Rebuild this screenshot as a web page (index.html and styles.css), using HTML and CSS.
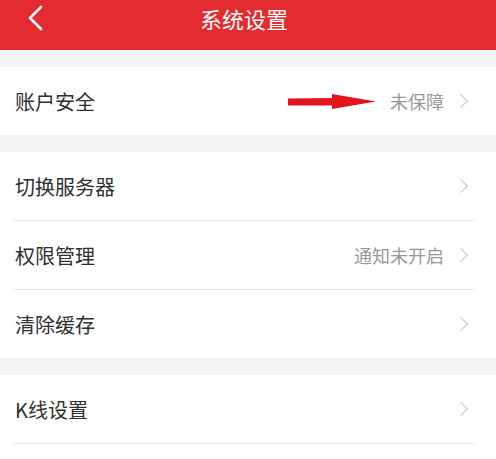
FILE: index.html
```html
<!DOCTYPE html>
<html lang="zh-CN">
<head>
    <meta charset="UTF-8">
    <title>系统设置</title>
    <link rel="stylesheet" href="styles.css">
</head>
<body>
<div class="header">
    <span class="back">
        <svg width="18" height="26" viewBox="0 0 18 26"><path d="M15 2 L4 13 L15 24" fill="none" stroke="#fff" stroke-width="2.6" stroke-linecap="round" stroke-linejoin="round"/></svg>
    </span>
    <div class="title">系统设置</div>
</div>

<div class="group">
    <div class="row">
        <span class="label">账户安全</span>
        <span class="extra">
            <svg class="mark" width="90" height="18" viewBox="0 0 90 18"><path d="M0 5.5 L44 5 L44 1 L88 8.5 L44 16 L44 12.5 L0 12.5 Z" fill="#e3141d"/></svg>
            <span class="value">未保障</span>
            <i class="arrow"></i>
        </span>
    </div>
</div>

<div class="group">
    <div class="row">
        <span class="label">切换服务器</span>
        <span class="extra"><i class="arrow"></i></span>
    </div>
    <div class="row">
        <span class="label">权限管理</span>
        <span class="extra"><span class="value">通知未开启</span><i class="arrow"></i></span>
    </div>
    <div class="row">
        <span class="label">清除缓存</span>
        <span class="extra"><i class="arrow"></i></span>
    </div>
</div>

<div class="group">
    <div class="row">
        <span class="label">K线设置</span>
        <span class="extra"><i class="arrow"></i></span>
    </div>
    <div class="row">
        <span class="label"></span>
    </div>
</div>
</body>
</html>
```

FILE: styles.css
```css
body {
    margin: 0;
    background: #f4f4f4;
    font-family: "Noto Sans CJK SC", "Noto Sans", sans-serif;
}

.header {
    display: flex;
    align-items: center;
    justify-content: center;
    position: relative;
    height: 50px;
    background: #e42b2f;
}

.back {
    position: absolute;
    left: 26px;
    top: 5px;
}

.title {
    color: #fff;
    font-size: 22px;
    margin-top: -14px;
    margin-left: -8px;
}

.group {
    background: #fff;
    margin-top: 17px;
}

.row {
    display: flex;
    align-items: center;
    justify-content: space-between;
    height: 68px;
    margin: 0 21px 0 13px;
    padding-left: 2px;
    border-bottom: 1px solid #e9e9e9;
}

.group .row:last-child {
    border-bottom: none;
}

.label {
    font-size: 20px;
    color: #303030;
}

.extra {
    display: flex;
    align-items: center;
}

.mark {
    margin-right: 12px;
    margin-top: 2px;
}

.value {
    font-size: 18px;
    color: #999;
    margin-right: 12px;
}

.arrow {
    display: block;
    width: 9px;
    height: 9px;
    border-top: 1.6px solid #c4c4c4;
    border-right: 1.6px solid #c4c4c4;
    transform: rotate(45deg);
    margin-right: 9px;
}
```
